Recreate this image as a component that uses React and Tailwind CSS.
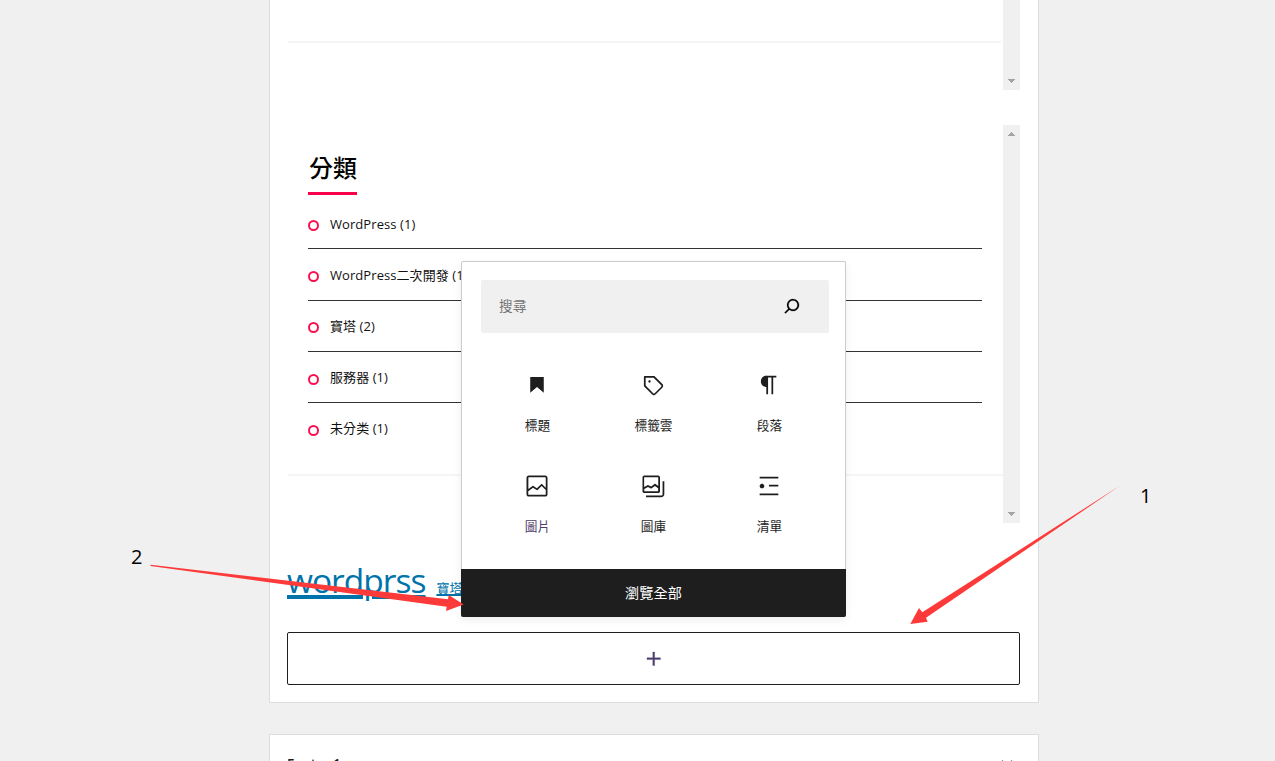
import React from "react";

const ICONS = {
  plus: "M11 12.5V17.5H12.5V12.5H17.5V11H12.5V6H11V11H6V12.5H11Z",
  search:
    "M13 5c-3.3 0-6 2.7-6 6 0 1.4.5 2.7 1.3 3.7l-3.8 3.8 1.1 1.1 3.8-3.8c1 .8 2.3 1.3 3.7 1.3 3.3 0 6-2.7 6-6S16.3 5 13 5zm0 10.5c-2.5 0-4.5-2-4.5-4.5s2-4.5 4.5-4.5 4.5 2 4.5 4.5-2 4.5-4.5 4.5z",
  heading: "M6.2 5.2v13.4l5.8-4.8 5.8 4.8V5.2z",
  tag: "M20.1 11.2l-6.7-6.7c-.1-.1-.3-.2-.5-.2H5c-.4-.1-.8.3-.8.7v7.8c0 .2.1.4.2.5l6.7 6.7c.2.2.5.4.7.5s.6.2.9.2c.3 0 .6-.1.9-.2.3-.1.5-.3.8-.5l5.6-5.6c.4-.4.7-1 .7-1.6.1-.6-.2-1.2-.6-1.6zM19 13.4L13.4 19c-.1.1-.2.1-.3.2-.2.1-.4.1-.6 0-.1 0-.2-.1-.3-.2l-6.5-6.5V5.8h6.8l6.5 6.5c.2.2.2.4.2.6 0 .1 0 .3-.2.5zM9 8c-.6 0-1 .4-1 1s.4 1 1 1 1-.4 1-1-.4-1-1-1z",
  paragraph:
    "M18.3 4H9.9v-.1l-.9.2c-2.3.4-4 2.4-4 4.8s1.7 4.4 4 4.8l.7.1V20h1.5V5.5h2.9V20h1.5V5.5h2.7V4z",
  image:
    "M19 3H5c-1.1 0-2 .9-2 2v14c0 1.1.9 2 2 2h14c1.1 0 2-.9 2-2V5c0-1.1-.9-2-2-2zM5 4.5h14c.3 0 .5.2.5.5v8.4l-3-2.9c-.3-.3-.8-.3-1 0L11.9 14 9 12c-.3-.2-.6-.2-.8 0l-3.6 2.6V5c-.1-.3.1-.5.4-.5zm14 15H5c-.3 0-.5-.2-.5-.5v-2.4l4.1-3 3 1.9c.3.2.7.2.9-.1L16 12l3.5 3.4V19c0 .3-.2.5-.5.5z",
  gallery:
    "M20.2 8v11c0 .7-.6 1.2-1.2 1.2H6v1.5h13c1.5 0 2.7-1.2 2.7-2.8V8zM18 16.4V4.6c0-.9-.7-1.6-1.6-1.6H4.6C3.7 3 3 3.7 3 4.6v11.8c0 .9.7 1.6 1.6 1.6h11.8c.9 0 1.6-.7 1.6-1.6zM4.5 4.6c0-.1.1-.1.1-.1h11.8c.1 0 .1.1.1.1V12l-2.3-1.7c-.3-.2-.6-.2-.9 0l-2.9 2.1L8 11.3c-.2-.1-.5-.1-.7 0l-2.9 1.5V4.6zm0 11.8v-1.8l3.2-1.7 2.4 1.2c.2.1.5.1.8-.1l2.8-2 2.7 2v2.5c0 .1-.1.1-.1.1H4.6c0-.1-.1-.2-.1-.2z",
  list: "M4 4v1.5h16V4H4zm8 8.5h8V11h-8v1.5zM4 20h16v-1.5H4V20zm4-8c0-1.1-.9-2-2-2s-2 .9-2 2 .9 2 2 2 2-.9 2-2z",
};

function Icon({ name, className }) {
  return (
    <svg viewBox="0 0 24 24" fill="currentColor" className={className} aria-hidden="true">
      <path d={ICONS[name]} />
    </svg>
  );
}

function ScrollArrow({ up }) {
  return (
    <svg width="17" height="17" viewBox="0 0 17 17" fill="#a3a3a3" shapeRendering="crispEdges">
      <path d={up ? "M5 11h7v-1h-1v-1h-1v-1h-1v-1h-1v1h-1v1h-1v1h-1z" : "M5 6h7v1h-1v1h-1v1h-1v1h-1v-1h-1v-1h-1v-1h-1z"} />
    </svg>
  );
}

const categories = [
  "WordPress (1)",
  "WordPress二次開發 (1)",
  "寶塔 (2)",
  "服務器 (1)",
  "未分类 (1)",
];

const blocks = [
  { name: "標題", icon: "heading" },
  { name: "標籤雲", icon: "tag" },
  { name: "段落", icon: "paragraph" },
  { name: "圖片", icon: "image", active: true },
  { name: "圖庫", icon: "gallery" },
  { name: "清單", icon: "list" },
];

function Inserter() {
  return (
    <div className="absolute left-[461px] top-[261px] flex h-[356px] w-[385px] flex-col rounded-[2px] border border-[#ccc] border-b-0 bg-white shadow-[0_3px_8px_rgba(0,0,0,0.07)]">
      <div className="ml-[19px] mt-[18px] flex h-[53px] w-[348px] shrink-0 items-center justify-between rounded-[2px] bg-[#f0f0f0] pl-[18px] pr-[25px]">
        <span className="text-[13.7px] text-[#757575]">搜尋</span>
        <Icon name="search" className="mb-px size-[24px] stroke-current stroke-[0.2] text-black" />
      </div>
      <div className="ml-[17px] mt-[38px] grid h-[196px] w-[348px] shrink-0 grid-cols-3">
        {blocks.map((b) => (
          <div key={b.name} className="flex h-[101px] flex-col items-center text-[#1e1e1e]">
            <Icon name={b.icon} className="size-[28px] shrink-0" />
            <span
              className={
                b.active
                  ? "mt-[17px] pl-px text-[12.7px] leading-[18px] text-[#4e3d6b]"
                  : "mt-[17px] pl-px text-[12.7px] leading-[18px]"
              }
            >
              {b.name}
            </span>
          </div>
        ))}
      </div>
      <button className="-mx-px mt-auto flex h-[48px] shrink-0 items-center justify-center rounded-b-[2px] bg-[#1e1e1e] text-[14.2px] text-white">
        瀏覽全部
      </button>
    </div>
  );
}

function Annotations() {
  return (
    <>
      <svg className="pointer-events-none absolute left-0 top-0" width="1275" height="761" fill="#fd3a3a">
        <path d="M1119.5 486L922.3 612.3L919 608L910.3 624L927.7 621.7L926 617.7Z" />
        <path d="M150.5 564.8L448 599.3L448.7 595L463.7 604.5L446 611L446.7 606.7L150.5 566Z" />
      </svg>
      <span className="absolute left-[1140px] top-[483px] text-[20px] leading-[26px] text-black">1</span>
      <span className="absolute left-[131px] top-[544px] text-[20px] leading-[26px] text-black">2</span>
    </>
  );
}

export default function App() {
  return (
    <div className="relative flex h-[761px] w-[1275px] flex-col items-start overflow-hidden bg-[#f0f0f0] pl-[269px] font-['Open_Sans','Noto_Sans_CJK_TC',sans-serif]">
      <section className="flex h-[703px] w-[770px] shrink-0 flex-col border border-t-0 border-[#ddd] bg-white pl-[17px] pr-[18px]">
        <div className="flex h-[90px] shrink-0">
          <div className="flex-1 pl-px pr-[2px]">
            <div className="h-[43px] border-b-2 border-[#f5f5f5]" />
          </div>
          <div className="flex w-[17px] flex-col justify-end bg-[#f0f0f0]">
            <ScrollArrow />
          </div>
        </div>

        <div className="mt-[35px] flex h-[398px] shrink-0">
          <div className="flex-1 pl-px">
            <div className="h-[351px] border-b-2 border-[#f5f5f5] pl-[20px] pr-[21px] pt-[24px]">
              <h2 className="h-[46px] w-[49px] whitespace-nowrap border-b-3 border-[#f9004d] pl-px text-[24px] font-medium leading-[37px] text-black">
                分類
              </h2>
              <ul className="pt-[3px]">
                {categories.map((c, i) => (
                  <li
                    key={c}
                    className={
                      i < categories.length - 1
                        ? "flex h-[51.25px] items-center border-b border-[#333] pt-[2.5px] text-[13px] tracking-[0.07px] text-[#111]"
                        : "flex h-[50px] items-center pt-[2px] text-[13px] tracking-[0.07px] text-[#111]"
                    }
                  >
                    <span className="mr-[11px] mt-[2px] size-[11px] rounded-full border-2 border-[#f9104f]" />
                    <span>{c}</span>
                  </li>
                ))}
              </ul>
            </div>
          </div>
          <div className="flex w-[17px] flex-col justify-between bg-[#f0f0f0]">
            <ScrollArrow up />
            <ScrollArrow />
          </div>
        </div>

        <div className="mt-[32px] flex h-[54px] shrink-0 items-baseline gap-[11px] text-[#0073aa] underline">
          <a className="text-[33.5px] leading-[50px] tracking-[-1px] decoration-[3px] underline-offset-[3px]">wordprss</a>
          <a className="text-[13px] decoration-1 underline-offset-2">寶塔</a>
        </div>

        <button className="mt-[23px] flex h-[53px] w-[733px] shrink-0 items-center justify-center rounded-[2px] border border-[#1e1e1e] text-[#4e3d6b]">
          <Icon name="plus" className="size-[28px] stroke-current stroke-[0.3]" />
        </button>
      </section>

      <section className="mt-[31px] flex h-[60px] w-[770px] shrink-0 items-start justify-between border border-[#ddd] bg-white pl-[17px] pr-[18px] pt-[19px]">
        <h3 className="text-[13.5px] font-semibold leading-[20px] text-[#1e1e1e]">Footer 1</h3>
        <svg width="26" height="24" viewBox="0 0 26 24" fill="none" stroke="#777" strokeWidth="1.4">
          <path d="M8 6.5l5 5 5-5" />
        </svg>
      </section>

      <Inserter />
      <Annotations />
    </div>
  );
}
